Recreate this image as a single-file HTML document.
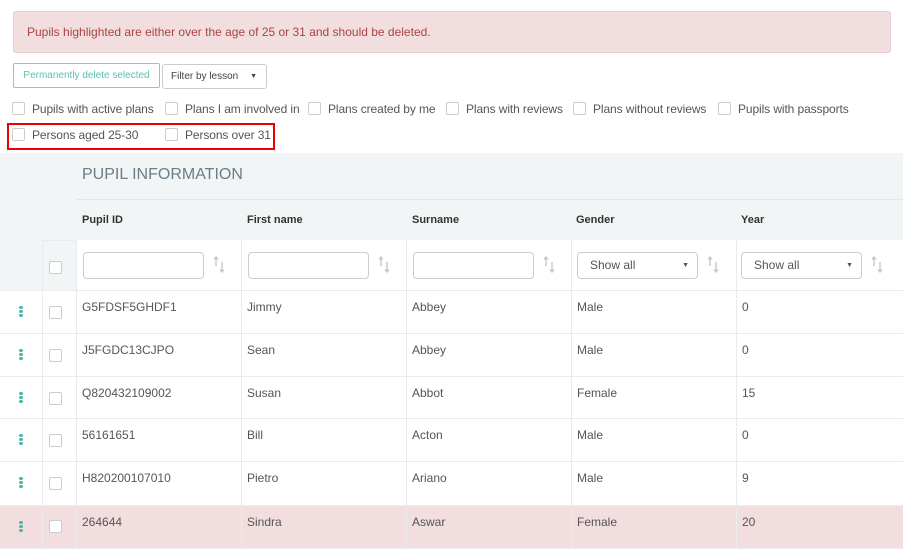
<!DOCTYPE html>
<html><head><style>
*{box-sizing:border-box;margin:0;padding:0}
body{width:903px;height:549px;overflow:hidden;background:#fff;font-family:"Liberation Sans",sans-serif;font-size:12px;color:#555;position:relative}
.abs{position:absolute}
.alert{left:13px;top:11px;width:878px;height:42px;background:#f2dede;border:1px solid #ebccd1;border-radius:3px;color:#a94442;font-size:12px;padding:13px 13px}
.btn{left:13px;top:63px;width:147px;height:25px;border:1px solid #7fcfc6;border-radius:2px;color:#5bbfb3;font-size:10px;text-align:center;line-height:23px}
.sel{left:162px;top:64px;width:105px;height:25px;border:1px solid #ccc;border-radius:3px;font-size:10px;padding:0 8px;line-height:24px;color:#444}
.sel:after{content:"▼";position:absolute;right:9px;top:0;font-size:7px}
.cb{display:inline-block;width:13px;height:13px;border:1px solid #ccc;border-radius:2px;background:#fff;vertical-align:middle}
.chk{font-size:12px;color:#555;white-space:nowrap;letter-spacing:-0.1px}
.chk .cb{margin-right:7px;position:relative;top:-1px}
.red{left:7px;top:123px;width:268px;height:27px;border:2px solid #e00}
.row{position:absolute;left:0;width:903px;border-bottom:1px solid #e8ecee}
.cell{position:absolute;top:0;height:100%;border-left:1px solid #e8ecee;padding:9px 5px}
.dots{position:absolute;left:19px;width:4px}
.dots i{display:block;width:4px;height:3px;background:#3fb8a8;border-radius:50%;margin-bottom:1px}
.inp{position:absolute;top:12px;width:121px;height:27px;border:1px solid #ccc;border-radius:4px;background:#fff;font-size:12px;padding:0 12px;line-height:25px;color:#555}
.dd:after{content:"▼";position:absolute;right:8px;top:0;font-size:7px}
.sort{position:absolute;top:16px;width:12px;height:17px}
.hl{font-size:11px;color:#333;font-weight:bold}
</style></head><body>
<svg width="0" height="0" style="position:absolute"><symbol id="s" viewBox="0 0 12 17"><path d="M3 1V10M1 3.5L3 1L5 3.5M9 6V16M7 13.5L9 16L11 13.5" stroke="#c4c8ca" stroke-width="1.4" fill="none"/></symbol></svg>
<div class="abs alert">Pupils highlighted are either over the age of 25 or 31 and should be deleted.</div>
<div class="abs btn">Permanently delete selected</div>
<div class="abs sel">Filter by lesson</div>
<div class="abs chk" style="left:12px;top:102px"><span class="cb"></span>Pupils with active plans</div>
<div class="abs chk" style="left:165px;top:102px"><span class="cb"></span>Plans I am involved in</div>
<div class="abs chk" style="left:308px;top:102px"><span class="cb"></span>Plans created by me</div>
<div class="abs chk" style="left:446px;top:102px"><span class="cb"></span>Plans with reviews</div>
<div class="abs chk" style="left:573px;top:102px"><span class="cb"></span>Plans without reviews</div>
<div class="abs chk" style="left:718px;top:102px"><span class="cb"></span>Pupils with passports</div>
<div class="abs chk" style="left:12px;top:128px"><span class="cb"></span>Persons aged 25-30</div>
<div class="abs chk" style="left:165px;top:128px"><span class="cb"></span>Persons over 31</div>
<div class="abs red"></div>

<div class="abs" style="left:0;top:153px;width:903px;height:137px;background:#f2f5f6"></div>
<div class="abs" style="left:82px;top:166px;font-size:16px;color:#6a7d88">PUPIL INFORMATION</div>
<div class="abs" style="left:76px;top:199px;width:827px;height:1px;background:#e2e7ea"></div>
<div class="abs hl" style="left:82px;top:214px">Pupil ID</div>
<div class="abs hl" style="left:247px;top:214px">First name</div>
<div class="abs hl" style="left:412px;top:214px">Surname</div>
<div class="abs hl" style="left:576px;top:214px">Gender</div>
<div class="abs hl" style="left:741px;top:214px">Year</div>

<div class="row" style="top:240px;height:51px;background:transparent;border-bottom:1px solid #e8ecee">
 <div class="cell" style="left:42px;width:34px;border-top:1px solid #e8ecee"><span class="cb" style="position:absolute;left:6px;top:20px"></span></div>
 <div class="cell" style="left:76px;width:165px;background:#fff"><div class="inp" style="left:6px"></div><svg class="sort" style="left:136px"><use href="#s"/></svg></div>
 <div class="cell" style="left:241px;width:165px;background:#fff"><div class="inp" style="left:6px"></div><svg class="sort" style="left:136px"><use href="#s"/></svg></div>
 <div class="cell" style="left:406px;width:165px;background:#fff"><div class="inp" style="left:6px"></div><svg class="sort" style="left:136px"><use href="#s"/></svg></div>
 <div class="cell" style="left:571px;width:165px;background:#fff"><div class="inp dd" style="left:5px">Show all</div><svg class="sort" style="left:135px"><use href="#s"/></svg></div>
 <div class="cell" style="left:736px;width:167px;background:#fff"><div class="inp dd" style="left:4px">Show all</div><svg class="sort" style="left:134px"><use href="#s"/></svg></div>
</div>

<div class="row" style="top:291px;height:43px"><div class="dots" style="top:15px"><i></i><i></i><i></i></div><div class="cell" style="left:42px;width:34px"><span class="cb" style="position:absolute;left:6px;top:15px"></span></div><div class="cell" style="left:76px;width:165px">G5FDSF5GHDF1</div><div class="cell" style="left:241px;width:165px">Jimmy</div><div class="cell" style="left:406px;width:165px">Abbey</div><div class="cell" style="left:571px;width:165px">Male</div><div class="cell" style="left:736px;width:167px">0</div></div>
<div class="row" style="top:334px;height:43px"><div class="dots" style="top:15px"><i></i><i></i><i></i></div><div class="cell" style="left:42px;width:34px"><span class="cb" style="position:absolute;left:6px;top:15px"></span></div><div class="cell" style="left:76px;width:165px">J5FGDC13CJPO</div><div class="cell" style="left:241px;width:165px">Sean</div><div class="cell" style="left:406px;width:165px">Abbey</div><div class="cell" style="left:571px;width:165px">Male</div><div class="cell" style="left:736px;width:167px">0</div></div>
<div class="row" style="top:377px;height:42px"><div class="dots" style="top:15px"><i></i><i></i><i></i></div><div class="cell" style="left:42px;width:34px"><span class="cb" style="position:absolute;left:6px;top:15px"></span></div><div class="cell" style="left:76px;width:165px">Q820432109002</div><div class="cell" style="left:241px;width:165px">Susan</div><div class="cell" style="left:406px;width:165px">Abbot</div><div class="cell" style="left:571px;width:165px">Female</div><div class="cell" style="left:736px;width:167px">15</div></div>
<div class="row" style="top:419px;height:43px"><div class="dots" style="top:15px"><i></i><i></i><i></i></div><div class="cell" style="left:42px;width:34px"><span class="cb" style="position:absolute;left:6px;top:15px"></span></div><div class="cell" style="left:76px;width:165px">56161651</div><div class="cell" style="left:241px;width:165px">Bill</div><div class="cell" style="left:406px;width:165px">Acton</div><div class="cell" style="left:571px;width:165px">Male</div><div class="cell" style="left:736px;width:167px">0</div></div>
<div class="row" style="top:462px;height:44px"><div class="dots" style="top:15px"><i></i><i></i><i></i></div><div class="cell" style="left:42px;width:34px"><span class="cb" style="position:absolute;left:6px;top:15px"></span></div><div class="cell" style="left:76px;width:165px">H820200107010</div><div class="cell" style="left:241px;width:165px">Pietro</div><div class="cell" style="left:406px;width:165px">Ariano</div><div class="cell" style="left:571px;width:165px">Male</div><div class="cell" style="left:736px;width:167px">9</div></div>
<div class="row" style="top:506px;height:43px;background:#f2dede"><div class="dots" style="top:15px"><i></i><i></i><i></i></div><div class="cell" style="left:42px;width:34px"><span class="cb" style="position:absolute;left:6px;top:14px"></span></div><div class="cell" style="left:76px;width:165px">264644</div><div class="cell" style="left:241px;width:165px">Sindra</div><div class="cell" style="left:406px;width:165px">Aswar</div><div class="cell" style="left:571px;width:165px">Female</div><div class="cell" style="left:736px;width:167px">20</div></div>
</body></html>
